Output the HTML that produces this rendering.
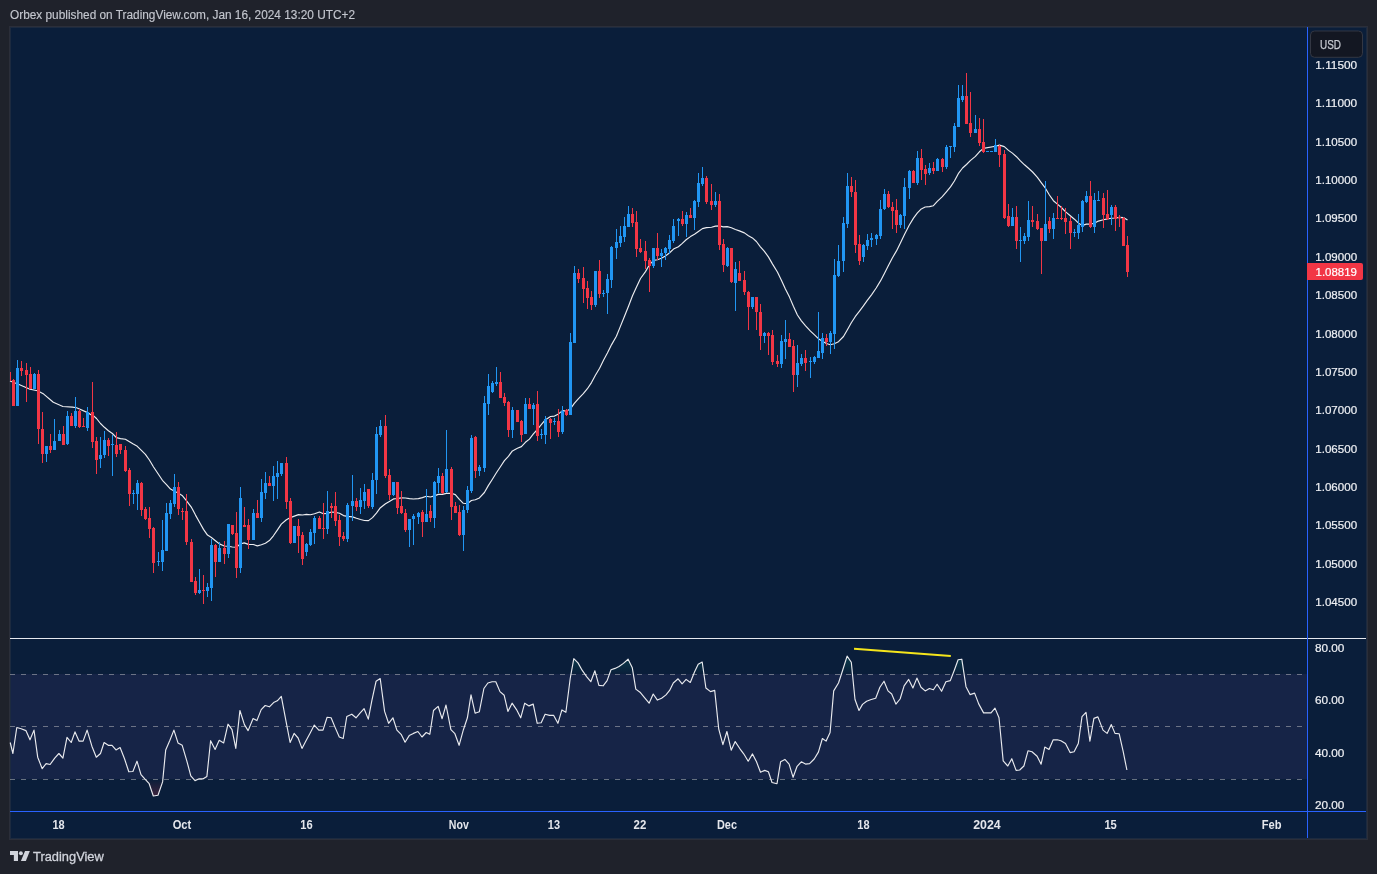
<!DOCTYPE html>
<html><head><meta charset="utf-8"><style>
html,body{margin:0;padding:0;background:#1f222b;width:1377px;height:874px;overflow:hidden}
svg{position:absolute;left:0;top:0;display:block;will-change:transform}
text{font-family:"Liberation Sans",sans-serif}
.ax{font-size:11.4px;fill:#eef0f4;stroke:#eef0f4;stroke-width:0.2px}
.tl{font-size:12.3px;fill:#e4e6ec;font-weight:bold}
.usd{font-size:13px;fill:#c8cbd2;stroke:#c8cbd2;stroke-width:0.25px}
.hdr{font-size:12px;fill:#c3c6ce;stroke:#c3c6ce;stroke-width:0.15px}
.tv{font-size:13.6px;fill:#d1d4dc;stroke:#d1d4dc;stroke-width:0.3px}
</style></head><body>
<svg width="1377" height="874" viewBox="0 0 1377 874">
<text x="10" y="19" class="hdr" textLength="345" lengthAdjust="spacingAndGlyphs">Orbex published on TradingView.com, Jan 16, 2024 13:20 UTC+2</text>
<rect x="9" y="26" width="1359" height="814" fill="#2b2e39"/>
<rect x="10" y="27" width="1357" height="812" fill="#1c2a3f"/>
<rect x="11" y="28" width="1355" height="810" fill="#0a1e3a"/>
<rect x="11" y="674" width="1296" height="105" fill="#162447"/>
<line x1="10" y1="674.5" x2="1305" y2="674.5" stroke="#9a9ea8" stroke-width="1" stroke-dasharray="5 6" opacity="0.65"/>
<line x1="10" y1="726.5" x2="1305" y2="726.5" stroke="#9a9ea8" stroke-width="1" stroke-dasharray="5 6" opacity="0.65"/>
<line x1="10" y1="779.5" x2="1305" y2="779.5" stroke="#9a9ea8" stroke-width="1" stroke-dasharray="5 6" opacity="0.65"/>
<line x1="10" y1="638.5" x2="1366" y2="638.5" stroke="#e6e8ee" stroke-width="1"/>
<line x1="10" y1="811.5" x2="1366" y2="811.5" stroke="#2962ff" stroke-width="1"/>
<line x1="1307.5" y1="27" x2="1307.5" y2="838" stroke="#2962ff" stroke-width="1"/>
<text x="1315.3" y="68.7" class="ax" textLength="41.8" lengthAdjust="spacingAndGlyphs">1.11500</text>
<text x="1315.3" y="107.1" class="ax" textLength="41.8" lengthAdjust="spacingAndGlyphs">1.11000</text>
<text x="1315.3" y="145.5" class="ax" textLength="41.8" lengthAdjust="spacingAndGlyphs">1.10500</text>
<text x="1315.3" y="183.9" class="ax" textLength="41.8" lengthAdjust="spacingAndGlyphs">1.10000</text>
<text x="1315.3" y="222.3" class="ax" textLength="41.8" lengthAdjust="spacingAndGlyphs">1.09500</text>
<text x="1315.3" y="260.7" class="ax" textLength="41.8" lengthAdjust="spacingAndGlyphs">1.09000</text>
<text x="1315.3" y="299.1" class="ax" textLength="41.8" lengthAdjust="spacingAndGlyphs">1.08500</text>
<text x="1315.3" y="337.5" class="ax" textLength="41.8" lengthAdjust="spacingAndGlyphs">1.08000</text>
<text x="1315.3" y="375.9" class="ax" textLength="41.8" lengthAdjust="spacingAndGlyphs">1.07500</text>
<text x="1315.3" y="414.3" class="ax" textLength="41.8" lengthAdjust="spacingAndGlyphs">1.07000</text>
<text x="1315.3" y="452.7" class="ax" textLength="41.8" lengthAdjust="spacingAndGlyphs">1.06500</text>
<text x="1315.3" y="491.0" class="ax" textLength="41.8" lengthAdjust="spacingAndGlyphs">1.06000</text>
<text x="1315.3" y="529.4" class="ax" textLength="41.8" lengthAdjust="spacingAndGlyphs">1.05500</text>
<text x="1315.3" y="567.8" class="ax" textLength="41.8" lengthAdjust="spacingAndGlyphs">1.05000</text>
<text x="1315.3" y="606.2" class="ax" textLength="41.8" lengthAdjust="spacingAndGlyphs">1.04500</text>
<path d="M1307 263h54a2 2 0 0 1 2 2v13a2 2 0 0 1 -2 2h-54z" fill="#f23645"/>
<text x="1315.5" y="275.7" class="ax" style="fill:#fff;stroke:#fff" textLength="41.5" lengthAdjust="spacingAndGlyphs">1.08819</text>
<rect x="1310.5" y="31" width="52" height="26.3" rx="4" fill="#131722" stroke="#333743"/>
<text x="1320" y="49.2" class="usd" textLength="21" lengthAdjust="spacingAndGlyphs">USD</text>
<text x="1314.9" y="652.0" class="ax" textLength="29.5" lengthAdjust="spacingAndGlyphs">80.00</text>
<text x="1314.9" y="704.4" class="ax" textLength="29.5" lengthAdjust="spacingAndGlyphs">60.00</text>
<text x="1314.9" y="756.8" class="ax" textLength="29.5" lengthAdjust="spacingAndGlyphs">40.00</text>
<text x="1314.9" y="809.2" class="ax" textLength="29.5" lengthAdjust="spacingAndGlyphs">20.00</text>
<text x="52.4" y="829.1" class="tl" textLength="12.2" lengthAdjust="spacingAndGlyphs">18</text>
<text x="172.7" y="829.1" class="tl" textLength="18.6" lengthAdjust="spacingAndGlyphs">Oct</text>
<text x="300.3" y="829.1" class="tl" textLength="12.4" lengthAdjust="spacingAndGlyphs">16</text>
<text x="448.8" y="829.1" class="tl" textLength="20" lengthAdjust="spacingAndGlyphs">Nov</text>
<text x="547.8" y="829.1" class="tl" textLength="12.2" lengthAdjust="spacingAndGlyphs">13</text>
<text x="633.6" y="829.1" class="tl" textLength="12.7" lengthAdjust="spacingAndGlyphs">22</text>
<text x="717.0" y="829.1" class="tl" textLength="20" lengthAdjust="spacingAndGlyphs">Dec</text>
<text x="857.3" y="829.1" class="tl" textLength="12.2" lengthAdjust="spacingAndGlyphs">18</text>
<text x="973.2" y="829.1" class="tl" textLength="27.5" lengthAdjust="spacingAndGlyphs">2024</text>
<text x="1104.4" y="829.1" class="tl" textLength="12.4" lengthAdjust="spacingAndGlyphs">15</text>
<text x="1261.7" y="829.1" class="tl" textLength="19.8" lengthAdjust="spacingAndGlyphs">Feb</text>
<polyline points="10.0,381.0 19.0,384.5 30.0,389.3 37.5,390.7 43.7,394.1 53.3,402.3 62.9,406.5 72.5,407.1 76.6,407.8 87.6,412.6 90.9,414.8 92.5,414.9 96.5,418.5 100.5,423.5 104.4,427.3 108.4,430.7 112.4,433.5 116.4,437.6 120.5,438.6 125.4,439.2 129.5,441.7 133.3,444.0 137.3,446.3 141.4,450.4 145.4,454.3 149.4,460.0 153.4,466.8 158.4,474.3 162.4,480.3 166.5,484.6 170.5,489.1 174.5,491.2 178.5,493.3 182.5,495.8 186.4,500.7 191.5,507.4 195.5,515.1 199.5,522.2 203.5,529.4 207.5,535.1 211.4,537.5 215.4,540.7 219.4,543.9 224.3,546.0 228.3,546.3 232.3,547.0 236.3,547.3 240.3,544.0 244.2,542.9 248.4,544.4 253.3,544.5 257.3,545.9 261.4,544.8 265.4,543.2 269.4,540.6 273.4,535.8 277.3,530.1 281.3,524.1 286.4,519.8 290.4,517.6 294.4,516.1 298.5,514.6 302.5,515.0 306.4,514.4 310.5,514.7 314.5,513.8 319.5,512.0 323.4,513.8 327.5,513.4 331.5,512.0 335.4,512.4 339.5,513.3 343.5,515.6 347.4,516.4 352.6,516.9 356.5,518.3 360.5,519.5 364.4,520.5 368.5,520.6 372.5,517.6 376.4,513.1 380.4,507.7 385.5,503.8 389.4,501.4 393.5,498.9 397.5,498.5 401.4,497.9 405.4,498.0 409.5,498.6 413.4,499.0 418.4,498.6 422.4,497.6 426.3,496.3 430.4,497.0 434.4,495.9 438.3,494.4 442.3,494.4 446.4,493.4 451.4,493.2 455.3,494.6 459.4,499.3 463.3,503.3 467.5,503.6 471.4,500.5 475.3,499.8 479.4,497.9 484.4,492.5 488.3,485.6 492.4,479.2 496.4,472.7 500.4,466.7 504.4,460.6 508.4,456.3 512.4,450.9 517.4,448.3 521.4,446.6 525.4,442.3 529.4,439.1 533.4,433.8 537.4,429.5 541.5,424.4 545.5,419.7 550.5,416.5 554.5,416.1 558.5,413.9 562.5,410.6 566.5,411.1 570.4,408.9 574.3,403.3 578.5,398.6 583.3,393.7 587.4,388.7 591.5,382.6 595.4,375.3 599.6,368.2 603.5,360.3 607.4,353.1 611.6,344.6 616.4,336.3 620.4,326.4 624.5,316.3 628.6,306.0 632.5,295.8 636.5,287.1 640.5,278.5 645.5,271.6 649.4,264.8 653.5,260.4 657.5,259.8 661.4,258.3 665.4,256.0 669.4,253.0 673.5,249.1 678.4,246.7 682.3,243.4 686.4,239.5 690.5,236.6 694.5,234.3 698.4,231.5 702.4,228.6 706.4,227.6 711.5,227.2 715.5,226.1 719.4,225.9 723.2,226.9 727.2,226.6 731.4,227.8 735.4,229.5 739.4,230.9 744.4,232.9 748.4,235.7 752.4,237.9 756.4,241.5 760.4,246.8 764.4,251.4 768.4,256.9 772.4,263.9 777.4,272.0 781.4,280.3 785.4,289.1 789.5,297.1 793.4,306.3 797.4,315.0 801.4,320.8 805.6,325.8 810.5,331.2 814.5,334.9 818.4,338.7 822.4,341.2 826.4,343.5 830.3,344.7 834.2,343.7 838.5,341.7 843.5,336.5 847.4,329.7 851.3,322.8 855.2,316.7 859.5,311.1 863.4,305.9 867.3,300.4 871.5,294.8 876.2,288.0 880.5,280.9 884.4,273.4 888.3,265.8 892.2,258.2 896.5,250.9 900.4,243.0 904.6,234.3 909.2,225.3 913.5,218.1 917.4,212.9 921.3,208.9 925.2,207.0 929.5,206.6 933.4,205.7 937.3,201.3 942.3,196.6 946.6,191.6 950.5,186.9 954.4,181.0 958.3,173.7 962.6,168.0 966.5,164.5 970.3,160.6 975.4,156.4 979.4,151.8 983.4,148.4 995.5,146.2 999.4,145.1 1004.3,146.6 1008.5,150.4 1012.4,153.1 1016.5,156.7 1020.4,160.9 1024.5,164.8 1028.5,168.3 1032.6,172.0 1037.4,177.4 1041.4,182.9 1045.4,188.2 1049.4,195.0 1053.4,200.7 1057.4,204.1 1061.4,207.5 1065.4,211.6 1070.3,215.7 1074.4,219.2 1078.5,223.2 1082.5,225.4 1086.4,224.1 1090.4,224.1 1094.4,223.3 1098.3,221.1 1103.4,219.8 1107.4,218.9 1111.4,218.2 1115.3,218.0 1119.3,217.4 1123.4,217.6 1127.5,220.1" fill="none" stroke="#ededf0" stroke-width="1.15" stroke-linejoin="round"/>
<rect x="10" y="372" width="1" height="9" fill="#f23645"/>
<rect x="986" y="151" width="3" height="1" fill="#2196f3"/><rect x="990" y="151" width="3" height="1" fill="#2196f3"/>
<rect x="13" y="379" width="1" height="27" fill="#f23645"/>
<rect x="12" y="380" width="3" height="26" fill="#f23645"/>
<rect x="17" y="360" width="1" height="46" fill="#2196f3"/>
<rect x="16" y="368" width="3" height="38" fill="#2196f3"/>
<rect x="21" y="361" width="1" height="15" fill="#f23645"/>
<rect x="20" y="368" width="3" height="3" fill="#f23645"/>
<rect x="26" y="363" width="1" height="39" fill="#f23645"/>
<rect x="25" y="370" width="3" height="5" fill="#f23645"/>
<rect x="30" y="367" width="1" height="22" fill="#f23645"/>
<rect x="29" y="374" width="3" height="15" fill="#f23645"/>
<rect x="34" y="373" width="1" height="16" fill="#2196f3"/>
<rect x="33" y="374" width="3" height="15" fill="#2196f3"/>
<rect x="38" y="370" width="1" height="74" fill="#f23645"/>
<rect x="37" y="374" width="3" height="55" fill="#f23645"/>
<rect x="42" y="412" width="1" height="51" fill="#f23645"/>
<rect x="41" y="429" width="3" height="25" fill="#f23645"/>
<rect x="46" y="446" width="1" height="16" fill="#2196f3"/>
<rect x="45" y="446" width="3" height="8" fill="#2196f3"/>
<rect x="50" y="434" width="1" height="19" fill="#f23645"/>
<rect x="49" y="446" width="3" height="4" fill="#f23645"/>
<rect x="54" y="419" width="1" height="31" fill="#2196f3"/>
<rect x="53" y="441" width="3" height="9" fill="#2196f3"/>
<rect x="59" y="430" width="1" height="11" fill="#2196f3"/>
<rect x="58" y="434" width="3" height="7" fill="#2196f3"/>
<rect x="63" y="426" width="1" height="19" fill="#f23645"/>
<rect x="62" y="434" width="3" height="11" fill="#f23645"/>
<rect x="67" y="411" width="1" height="34" fill="#2196f3"/>
<rect x="66" y="416" width="3" height="28" fill="#2196f3"/>
<rect x="71" y="413" width="1" height="13" fill="#f23645"/>
<rect x="70" y="416" width="3" height="10" fill="#f23645"/>
<rect x="75" y="397" width="1" height="31" fill="#2196f3"/>
<rect x="74" y="411" width="3" height="15" fill="#2196f3"/>
<rect x="79" y="409" width="1" height="19" fill="#f23645"/>
<rect x="78" y="411" width="3" height="16" fill="#f23645"/>
<rect x="83" y="418" width="1" height="9" fill="#f23645"/>
<rect x="82" y="426" width="3" height="1" fill="#f23645"/>
<rect x="87" y="407" width="1" height="24" fill="#2196f3"/>
<rect x="86" y="412" width="3" height="16" fill="#2196f3"/>
<rect x="92" y="382" width="1" height="66" fill="#f23645"/>
<rect x="91" y="412" width="3" height="30" fill="#f23645"/>
<rect x="96" y="437" width="1" height="37" fill="#f23645"/>
<rect x="95" y="441" width="3" height="19" fill="#f23645"/>
<rect x="100" y="437" width="1" height="31" fill="#2196f3"/>
<rect x="99" y="455" width="3" height="4" fill="#2196f3"/>
<rect x="104" y="431" width="1" height="27" fill="#2196f3"/>
<rect x="103" y="440" width="3" height="15" fill="#2196f3"/>
<rect x="108" y="438" width="1" height="18" fill="#f23645"/>
<rect x="107" y="440" width="3" height="6" fill="#f23645"/>
<rect x="112" y="435" width="1" height="41" fill="#2196f3"/>
<rect x="111" y="444" width="3" height="1" fill="#2196f3"/>
<rect x="116" y="432" width="1" height="25" fill="#f23645"/>
<rect x="115" y="445" width="3" height="9" fill="#f23645"/>
<rect x="120" y="444" width="1" height="10" fill="#f23645"/>
<rect x="119" y="444" width="3" height="6" fill="#f23645"/>
<rect x="125" y="446" width="1" height="26" fill="#f23645"/>
<rect x="124" y="450" width="3" height="21" fill="#f23645"/>
<rect x="129" y="468" width="1" height="38" fill="#f23645"/>
<rect x="128" y="470" width="3" height="24" fill="#f23645"/>
<rect x="133" y="490" width="1" height="14" fill="#2196f3"/>
<rect x="132" y="493" width="3" height="1" fill="#2196f3"/>
<rect x="137" y="480" width="1" height="30" fill="#2196f3"/>
<rect x="136" y="483" width="3" height="11" fill="#2196f3"/>
<rect x="141" y="482" width="1" height="34" fill="#f23645"/>
<rect x="140" y="483" width="3" height="27" fill="#f23645"/>
<rect x="145" y="507" width="1" height="13" fill="#f23645"/>
<rect x="144" y="509" width="3" height="10" fill="#f23645"/>
<rect x="149" y="507" width="1" height="31" fill="#f23645"/>
<rect x="148" y="518" width="3" height="11" fill="#f23645"/>
<rect x="153" y="527" width="1" height="46" fill="#f23645"/>
<rect x="152" y="528" width="3" height="35" fill="#f23645"/>
<rect x="158" y="552" width="1" height="14" fill="#2196f3"/>
<rect x="157" y="561" width="3" height="1" fill="#2196f3"/>
<rect x="162" y="520" width="1" height="51" fill="#2196f3"/>
<rect x="161" y="550" width="3" height="12" fill="#2196f3"/>
<rect x="166" y="503" width="1" height="48" fill="#2196f3"/>
<rect x="165" y="513" width="3" height="38" fill="#2196f3"/>
<rect x="170" y="500" width="1" height="19" fill="#2196f3"/>
<rect x="169" y="503" width="3" height="11" fill="#2196f3"/>
<rect x="174" y="474" width="1" height="33" fill="#2196f3"/>
<rect x="173" y="487" width="3" height="17" fill="#2196f3"/>
<rect x="178" y="482" width="1" height="33" fill="#f23645"/>
<rect x="177" y="487" width="3" height="22" fill="#f23645"/>
<rect x="182" y="508" width="1" height="12" fill="#f23645"/>
<rect x="181" y="511" width="3" height="1" fill="#f23645"/>
<rect x="186" y="494" width="1" height="51" fill="#f23645"/>
<rect x="185" y="511" width="3" height="31" fill="#f23645"/>
<rect x="191" y="539" width="1" height="43" fill="#f23645"/>
<rect x="190" y="542" width="3" height="40" fill="#f23645"/>
<rect x="195" y="577" width="1" height="18" fill="#f23645"/>
<rect x="194" y="581" width="3" height="12" fill="#f23645"/>
<rect x="199" y="569" width="1" height="25" fill="#2196f3"/>
<rect x="198" y="590" width="3" height="3" fill="#2196f3"/>
<rect x="203" y="575" width="1" height="29" fill="#f23645"/>
<rect x="202" y="590" width="3" height="1" fill="#f23645"/>
<rect x="207" y="583" width="1" height="14" fill="#2196f3"/>
<rect x="206" y="587" width="3" height="4" fill="#2196f3"/>
<rect x="211" y="539" width="1" height="62" fill="#2196f3"/>
<rect x="210" y="545" width="3" height="43" fill="#2196f3"/>
<rect x="215" y="544" width="1" height="33" fill="#f23645"/>
<rect x="214" y="545" width="3" height="17" fill="#f23645"/>
<rect x="219" y="542" width="1" height="20" fill="#2196f3"/>
<rect x="218" y="548" width="3" height="14" fill="#2196f3"/>
<rect x="224" y="541" width="1" height="23" fill="#f23645"/>
<rect x="223" y="548" width="3" height="6" fill="#f23645"/>
<rect x="228" y="524" width="1" height="34" fill="#2196f3"/>
<rect x="227" y="524" width="3" height="30" fill="#2196f3"/>
<rect x="232" y="525" width="1" height="10" fill="#f23645"/>
<rect x="231" y="525" width="3" height="9" fill="#f23645"/>
<rect x="236" y="512" width="1" height="66" fill="#f23645"/>
<rect x="235" y="533" width="3" height="35" fill="#f23645"/>
<rect x="240" y="487" width="1" height="86" fill="#2196f3"/>
<rect x="239" y="498" width="3" height="70" fill="#2196f3"/>
<rect x="244" y="507" width="1" height="20" fill="#f23645"/>
<rect x="243" y="525" width="3" height="2" fill="#f23645"/>
<rect x="248" y="519" width="1" height="30" fill="#f23645"/>
<rect x="247" y="525" width="3" height="15" fill="#f23645"/>
<rect x="253" y="509" width="1" height="31" fill="#2196f3"/>
<rect x="252" y="513" width="3" height="27" fill="#2196f3"/>
<rect x="257" y="500" width="1" height="18" fill="#f23645"/>
<rect x="256" y="513" width="3" height="5" fill="#f23645"/>
<rect x="261" y="479" width="1" height="43" fill="#2196f3"/>
<rect x="260" y="492" width="3" height="26" fill="#2196f3"/>
<rect x="265" y="472" width="1" height="27" fill="#2196f3"/>
<rect x="264" y="483" width="3" height="10" fill="#2196f3"/>
<rect x="269" y="476" width="1" height="10" fill="#f23645"/>
<rect x="268" y="483" width="3" height="3" fill="#f23645"/>
<rect x="273" y="466" width="1" height="35" fill="#2196f3"/>
<rect x="272" y="476" width="3" height="10" fill="#2196f3"/>
<rect x="277" y="461" width="1" height="38" fill="#2196f3"/>
<rect x="276" y="473" width="3" height="4" fill="#2196f3"/>
<rect x="281" y="463" width="1" height="13" fill="#2196f3"/>
<rect x="280" y="463" width="3" height="11" fill="#2196f3"/>
<rect x="286" y="457" width="1" height="52" fill="#f23645"/>
<rect x="285" y="463" width="3" height="39" fill="#f23645"/>
<rect x="290" y="498" width="1" height="46" fill="#f23645"/>
<rect x="289" y="501" width="3" height="42" fill="#f23645"/>
<rect x="294" y="526" width="1" height="17" fill="#2196f3"/>
<rect x="293" y="526" width="3" height="17" fill="#2196f3"/>
<rect x="298" y="519" width="1" height="34" fill="#f23645"/>
<rect x="297" y="526" width="3" height="10" fill="#f23645"/>
<rect x="302" y="532" width="1" height="33" fill="#f23645"/>
<rect x="301" y="535" width="3" height="24" fill="#f23645"/>
<rect x="306" y="543" width="1" height="13" fill="#2196f3"/>
<rect x="305" y="544" width="3" height="8" fill="#2196f3"/>
<rect x="310" y="529" width="1" height="17" fill="#2196f3"/>
<rect x="309" y="532" width="3" height="13" fill="#2196f3"/>
<rect x="314" y="516" width="1" height="28" fill="#2196f3"/>
<rect x="313" y="518" width="3" height="15" fill="#2196f3"/>
<rect x="319" y="516" width="1" height="13" fill="#f23645"/>
<rect x="318" y="518" width="3" height="11" fill="#f23645"/>
<rect x="323" y="503" width="1" height="36" fill="#f23645"/>
<rect x="322" y="528" width="3" height="1" fill="#f23645"/>
<rect x="327" y="491" width="1" height="43" fill="#2196f3"/>
<rect x="326" y="511" width="3" height="18" fill="#2196f3"/>
<rect x="331" y="503" width="1" height="15" fill="#f23645"/>
<rect x="330" y="506" width="3" height="2" fill="#f23645"/>
<rect x="335" y="492" width="1" height="34" fill="#f23645"/>
<rect x="334" y="506" width="3" height="15" fill="#f23645"/>
<rect x="339" y="515" width="1" height="31" fill="#f23645"/>
<rect x="338" y="520" width="3" height="17" fill="#f23645"/>
<rect x="343" y="532" width="1" height="9" fill="#f23645"/>
<rect x="342" y="536" width="3" height="3" fill="#f23645"/>
<rect x="347" y="503" width="1" height="39" fill="#2196f3"/>
<rect x="346" y="505" width="3" height="34" fill="#2196f3"/>
<rect x="352" y="475" width="1" height="46" fill="#2196f3"/>
<rect x="351" y="501" width="3" height="5" fill="#2196f3"/>
<rect x="356" y="498" width="1" height="13" fill="#f23645"/>
<rect x="355" y="501" width="3" height="6" fill="#f23645"/>
<rect x="360" y="488" width="1" height="26" fill="#2196f3"/>
<rect x="359" y="500" width="3" height="7" fill="#2196f3"/>
<rect x="364" y="484" width="1" height="25" fill="#2196f3"/>
<rect x="363" y="492" width="3" height="9" fill="#2196f3"/>
<rect x="368" y="489" width="1" height="19" fill="#f23645"/>
<rect x="367" y="489" width="3" height="17" fill="#f23645"/>
<rect x="372" y="473" width="1" height="36" fill="#2196f3"/>
<rect x="371" y="480" width="3" height="27" fill="#2196f3"/>
<rect x="376" y="427" width="1" height="67" fill="#2196f3"/>
<rect x="375" y="434" width="3" height="46" fill="#2196f3"/>
<rect x="380" y="420" width="1" height="17" fill="#2196f3"/>
<rect x="379" y="426" width="3" height="9" fill="#2196f3"/>
<rect x="385" y="415" width="1" height="63" fill="#f23645"/>
<rect x="384" y="426" width="3" height="50" fill="#f23645"/>
<rect x="389" y="469" width="1" height="31" fill="#f23645"/>
<rect x="388" y="475" width="3" height="20" fill="#f23645"/>
<rect x="393" y="482" width="1" height="14" fill="#2196f3"/>
<rect x="392" y="482" width="3" height="13" fill="#2196f3"/>
<rect x="397" y="482" width="1" height="32" fill="#f23645"/>
<rect x="396" y="482" width="3" height="26" fill="#f23645"/>
<rect x="401" y="491" width="1" height="23" fill="#f23645"/>
<rect x="400" y="506" width="3" height="7" fill="#f23645"/>
<rect x="405" y="509" width="1" height="23" fill="#f23645"/>
<rect x="404" y="513" width="3" height="17" fill="#f23645"/>
<rect x="409" y="519" width="1" height="28" fill="#2196f3"/>
<rect x="408" y="519" width="3" height="11" fill="#2196f3"/>
<rect x="413" y="514" width="1" height="31" fill="#2196f3"/>
<rect x="412" y="516" width="3" height="3" fill="#2196f3"/>
<rect x="418" y="512" width="1" height="12" fill="#2196f3"/>
<rect x="417" y="513" width="3" height="4" fill="#2196f3"/>
<rect x="422" y="510" width="1" height="27" fill="#f23645"/>
<rect x="421" y="512" width="3" height="10" fill="#f23645"/>
<rect x="426" y="489" width="1" height="33" fill="#2196f3"/>
<rect x="425" y="514" width="3" height="8" fill="#2196f3"/>
<rect x="430" y="505" width="1" height="17" fill="#f23645"/>
<rect x="429" y="511" width="3" height="7" fill="#f23645"/>
<rect x="434" y="481" width="1" height="47" fill="#2196f3"/>
<rect x="433" y="482" width="3" height="36" fill="#2196f3"/>
<rect x="438" y="468" width="1" height="25" fill="#2196f3"/>
<rect x="437" y="476" width="3" height="7" fill="#2196f3"/>
<rect x="442" y="473" width="1" height="21" fill="#f23645"/>
<rect x="441" y="476" width="3" height="17" fill="#f23645"/>
<rect x="446" y="430" width="1" height="63" fill="#2196f3"/>
<rect x="445" y="469" width="3" height="23" fill="#2196f3"/>
<rect x="451" y="467" width="1" height="53" fill="#f23645"/>
<rect x="450" y="469" width="3" height="38" fill="#f23645"/>
<rect x="455" y="502" width="1" height="11" fill="#f23645"/>
<rect x="454" y="506" width="3" height="7" fill="#f23645"/>
<rect x="459" y="505" width="1" height="31" fill="#f23645"/>
<rect x="458" y="512" width="3" height="23" fill="#f23645"/>
<rect x="463" y="506" width="1" height="45" fill="#2196f3"/>
<rect x="462" y="510" width="3" height="25" fill="#2196f3"/>
<rect x="467" y="486" width="1" height="27" fill="#2196f3"/>
<rect x="466" y="490" width="3" height="20" fill="#2196f3"/>
<rect x="471" y="435" width="1" height="58" fill="#2196f3"/>
<rect x="470" y="438" width="3" height="53" fill="#2196f3"/>
<rect x="475" y="436" width="1" height="42" fill="#f23645"/>
<rect x="474" y="437" width="3" height="34" fill="#f23645"/>
<rect x="479" y="465" width="1" height="11" fill="#2196f3"/>
<rect x="478" y="467" width="3" height="4" fill="#2196f3"/>
<rect x="484" y="396" width="1" height="76" fill="#2196f3"/>
<rect x="483" y="403" width="3" height="65" fill="#2196f3"/>
<rect x="488" y="374" width="1" height="41" fill="#2196f3"/>
<rect x="487" y="386" width="3" height="18" fill="#2196f3"/>
<rect x="492" y="381" width="1" height="12" fill="#2196f3"/>
<rect x="491" y="383" width="3" height="9" fill="#2196f3"/>
<rect x="496" y="367" width="1" height="19" fill="#2196f3"/>
<rect x="495" y="382" width="3" height="2" fill="#2196f3"/>
<rect x="500" y="372" width="1" height="26" fill="#f23645"/>
<rect x="499" y="382" width="3" height="16" fill="#f23645"/>
<rect x="504" y="393" width="1" height="13" fill="#f23645"/>
<rect x="503" y="397" width="3" height="6" fill="#f23645"/>
<rect x="508" y="401" width="1" height="36" fill="#f23645"/>
<rect x="507" y="402" width="3" height="28" fill="#f23645"/>
<rect x="512" y="407" width="1" height="31" fill="#2196f3"/>
<rect x="511" y="410" width="3" height="20" fill="#2196f3"/>
<rect x="517" y="410" width="1" height="12" fill="#f23645"/>
<rect x="516" y="410" width="3" height="12" fill="#f23645"/>
<rect x="521" y="420" width="1" height="22" fill="#f23645"/>
<rect x="520" y="421" width="3" height="14" fill="#f23645"/>
<rect x="525" y="398" width="1" height="36" fill="#2196f3"/>
<rect x="524" y="404" width="3" height="30" fill="#2196f3"/>
<rect x="529" y="398" width="1" height="11" fill="#f23645"/>
<rect x="528" y="404" width="3" height="5" fill="#f23645"/>
<rect x="533" y="403" width="1" height="22" fill="#2196f3"/>
<rect x="532" y="405" width="3" height="4" fill="#2196f3"/>
<rect x="537" y="391" width="1" height="50" fill="#f23645"/>
<rect x="536" y="404" width="3" height="32" fill="#f23645"/>
<rect x="541" y="429" width="1" height="10" fill="#2196f3"/>
<rect x="540" y="434" width="3" height="1" fill="#2196f3"/>
<rect x="545" y="416" width="1" height="28" fill="#2196f3"/>
<rect x="544" y="419" width="3" height="16" fill="#2196f3"/>
<rect x="550" y="418" width="1" height="21" fill="#f23645"/>
<rect x="549" y="419" width="3" height="4" fill="#f23645"/>
<rect x="554" y="418" width="1" height="7" fill="#2196f3"/>
<rect x="553" y="421" width="3" height="1" fill="#2196f3"/>
<rect x="558" y="409" width="1" height="28" fill="#f23645"/>
<rect x="557" y="421" width="3" height="11" fill="#f23645"/>
<rect x="562" y="406" width="1" height="28" fill="#2196f3"/>
<rect x="561" y="411" width="3" height="21" fill="#2196f3"/>
<rect x="566" y="409" width="1" height="7" fill="#f23645"/>
<rect x="565" y="410" width="3" height="5" fill="#f23645"/>
<rect x="570" y="333" width="1" height="82" fill="#2196f3"/>
<rect x="569" y="342" width="3" height="73" fill="#2196f3"/>
<rect x="574" y="266" width="1" height="77" fill="#2196f3"/>
<rect x="573" y="273" width="3" height="70" fill="#2196f3"/>
<rect x="578" y="269" width="1" height="14" fill="#f23645"/>
<rect x="577" y="273" width="3" height="6" fill="#f23645"/>
<rect x="583" y="267" width="1" height="36" fill="#f23645"/>
<rect x="582" y="278" width="3" height="11" fill="#f23645"/>
<rect x="587" y="281" width="1" height="28" fill="#f23645"/>
<rect x="586" y="288" width="3" height="10" fill="#f23645"/>
<rect x="591" y="291" width="1" height="19" fill="#f23645"/>
<rect x="590" y="297" width="3" height="8" fill="#f23645"/>
<rect x="595" y="271" width="1" height="36" fill="#2196f3"/>
<rect x="594" y="271" width="3" height="34" fill="#2196f3"/>
<rect x="599" y="260" width="1" height="38" fill="#f23645"/>
<rect x="598" y="271" width="3" height="23" fill="#f23645"/>
<rect x="603" y="290" width="1" height="7" fill="#2196f3"/>
<rect x="602" y="293" width="3" height="1" fill="#2196f3"/>
<rect x="607" y="274" width="1" height="40" fill="#2196f3"/>
<rect x="606" y="279" width="3" height="14" fill="#2196f3"/>
<rect x="611" y="246" width="1" height="42" fill="#2196f3"/>
<rect x="610" y="247" width="3" height="33" fill="#2196f3"/>
<rect x="616" y="229" width="1" height="30" fill="#2196f3"/>
<rect x="615" y="242" width="3" height="6" fill="#2196f3"/>
<rect x="620" y="226" width="1" height="21" fill="#2196f3"/>
<rect x="619" y="236" width="3" height="7" fill="#2196f3"/>
<rect x="624" y="217" width="1" height="25" fill="#2196f3"/>
<rect x="623" y="226" width="3" height="11" fill="#2196f3"/>
<rect x="628" y="206" width="1" height="21" fill="#2196f3"/>
<rect x="627" y="214" width="3" height="13" fill="#2196f3"/>
<rect x="632" y="208" width="1" height="19" fill="#f23645"/>
<rect x="631" y="214" width="3" height="9" fill="#f23645"/>
<rect x="636" y="211" width="1" height="46" fill="#f23645"/>
<rect x="635" y="222" width="3" height="27" fill="#f23645"/>
<rect x="640" y="239" width="1" height="14" fill="#f23645"/>
<rect x="639" y="248" width="3" height="4" fill="#f23645"/>
<rect x="645" y="241" width="1" height="28" fill="#f23645"/>
<rect x="644" y="251" width="3" height="10" fill="#f23645"/>
<rect x="649" y="258" width="1" height="34" fill="#f23645"/>
<rect x="648" y="260" width="3" height="6" fill="#f23645"/>
<rect x="653" y="248" width="1" height="20" fill="#2196f3"/>
<rect x="652" y="248" width="3" height="18" fill="#2196f3"/>
<rect x="657" y="233" width="1" height="27" fill="#f23645"/>
<rect x="656" y="248" width="3" height="8" fill="#f23645"/>
<rect x="661" y="249" width="1" height="18" fill="#2196f3"/>
<rect x="660" y="253" width="3" height="3" fill="#2196f3"/>
<rect x="665" y="247" width="1" height="13" fill="#2196f3"/>
<rect x="664" y="248" width="3" height="5" fill="#2196f3"/>
<rect x="669" y="235" width="1" height="19" fill="#2196f3"/>
<rect x="668" y="240" width="3" height="9" fill="#2196f3"/>
<rect x="673" y="219" width="1" height="24" fill="#2196f3"/>
<rect x="672" y="226" width="3" height="15" fill="#2196f3"/>
<rect x="678" y="218" width="1" height="18" fill="#2196f3"/>
<rect x="677" y="219" width="3" height="2" fill="#2196f3"/>
<rect x="682" y="211" width="1" height="15" fill="#f23645"/>
<rect x="681" y="219" width="3" height="5" fill="#f23645"/>
<rect x="686" y="212" width="1" height="25" fill="#2196f3"/>
<rect x="685" y="215" width="3" height="9" fill="#2196f3"/>
<rect x="690" y="208" width="1" height="10" fill="#f23645"/>
<rect x="689" y="215" width="3" height="3" fill="#f23645"/>
<rect x="694" y="200" width="1" height="30" fill="#2196f3"/>
<rect x="693" y="201" width="3" height="17" fill="#2196f3"/>
<rect x="698" y="173" width="1" height="34" fill="#2196f3"/>
<rect x="697" y="183" width="3" height="19" fill="#2196f3"/>
<rect x="702" y="167" width="1" height="19" fill="#2196f3"/>
<rect x="701" y="178" width="3" height="6" fill="#2196f3"/>
<rect x="706" y="176" width="1" height="28" fill="#f23645"/>
<rect x="705" y="178" width="3" height="24" fill="#f23645"/>
<rect x="711" y="184" width="1" height="26" fill="#f23645"/>
<rect x="710" y="201" width="3" height="4" fill="#f23645"/>
<rect x="715" y="192" width="1" height="15" fill="#2196f3"/>
<rect x="714" y="201" width="3" height="4" fill="#2196f3"/>
<rect x="719" y="194" width="1" height="56" fill="#f23645"/>
<rect x="718" y="201" width="3" height="44" fill="#f23645"/>
<rect x="723" y="239" width="1" height="33" fill="#f23645"/>
<rect x="722" y="244" width="3" height="21" fill="#f23645"/>
<rect x="727" y="247" width="1" height="20" fill="#2196f3"/>
<rect x="726" y="248" width="3" height="18" fill="#2196f3"/>
<rect x="731" y="248" width="1" height="35" fill="#f23645"/>
<rect x="730" y="248" width="3" height="34" fill="#f23645"/>
<rect x="735" y="262" width="1" height="49" fill="#2196f3"/>
<rect x="734" y="269" width="3" height="14" fill="#2196f3"/>
<rect x="739" y="261" width="1" height="20" fill="#f23645"/>
<rect x="738" y="273" width="3" height="8" fill="#f23645"/>
<rect x="744" y="271" width="1" height="24" fill="#f23645"/>
<rect x="743" y="280" width="3" height="12" fill="#f23645"/>
<rect x="748" y="291" width="1" height="39" fill="#f23645"/>
<rect x="747" y="292" width="3" height="15" fill="#f23645"/>
<rect x="752" y="297" width="1" height="12" fill="#2196f3"/>
<rect x="751" y="297" width="3" height="10" fill="#2196f3"/>
<rect x="756" y="297" width="1" height="33" fill="#f23645"/>
<rect x="755" y="297" width="3" height="15" fill="#f23645"/>
<rect x="760" y="304" width="1" height="46" fill="#f23645"/>
<rect x="759" y="312" width="3" height="24" fill="#f23645"/>
<rect x="764" y="332" width="1" height="11" fill="#2196f3"/>
<rect x="763" y="333" width="3" height="3" fill="#2196f3"/>
<rect x="768" y="332" width="1" height="23" fill="#f23645"/>
<rect x="767" y="333" width="3" height="3" fill="#f23645"/>
<rect x="772" y="330" width="1" height="35" fill="#f23645"/>
<rect x="771" y="335" width="3" height="27" fill="#f23645"/>
<rect x="777" y="355" width="1" height="12" fill="#f23645"/>
<rect x="776" y="361" width="3" height="3" fill="#f23645"/>
<rect x="781" y="335" width="1" height="33" fill="#2196f3"/>
<rect x="780" y="341" width="3" height="23" fill="#2196f3"/>
<rect x="785" y="320" width="1" height="39" fill="#2196f3"/>
<rect x="784" y="339" width="3" height="3" fill="#2196f3"/>
<rect x="789" y="333" width="1" height="14" fill="#f23645"/>
<rect x="788" y="339" width="3" height="8" fill="#f23645"/>
<rect x="793" y="340" width="1" height="52" fill="#f23645"/>
<rect x="792" y="346" width="3" height="29" fill="#f23645"/>
<rect x="797" y="345" width="1" height="42" fill="#2196f3"/>
<rect x="796" y="363" width="3" height="12" fill="#2196f3"/>
<rect x="801" y="354" width="1" height="12" fill="#2196f3"/>
<rect x="800" y="358" width="3" height="6" fill="#2196f3"/>
<rect x="805" y="350" width="1" height="21" fill="#f23645"/>
<rect x="804" y="358" width="3" height="5" fill="#f23645"/>
<rect x="810" y="357" width="1" height="21" fill="#2196f3"/>
<rect x="809" y="361" width="3" height="1" fill="#2196f3"/>
<rect x="814" y="356" width="1" height="8" fill="#2196f3"/>
<rect x="813" y="357" width="3" height="5" fill="#2196f3"/>
<rect x="818" y="312" width="1" height="46" fill="#2196f3"/>
<rect x="817" y="351" width="3" height="7" fill="#2196f3"/>
<rect x="822" y="333" width="1" height="26" fill="#2196f3"/>
<rect x="821" y="338" width="3" height="15" fill="#2196f3"/>
<rect x="826" y="334" width="1" height="12" fill="#f23645"/>
<rect x="825" y="338" width="3" height="4" fill="#f23645"/>
<rect x="830" y="331" width="1" height="23" fill="#2196f3"/>
<rect x="829" y="333" width="3" height="9" fill="#2196f3"/>
<rect x="834" y="259" width="1" height="90" fill="#2196f3"/>
<rect x="833" y="275" width="3" height="59" fill="#2196f3"/>
<rect x="838" y="245" width="1" height="32" fill="#2196f3"/>
<rect x="837" y="261" width="3" height="15" fill="#2196f3"/>
<rect x="843" y="217" width="1" height="55" fill="#2196f3"/>
<rect x="842" y="223" width="3" height="38" fill="#2196f3"/>
<rect x="847" y="173" width="1" height="55" fill="#2196f3"/>
<rect x="846" y="186" width="3" height="38" fill="#2196f3"/>
<rect x="851" y="177" width="1" height="20" fill="#f23645"/>
<rect x="850" y="186" width="3" height="6" fill="#f23645"/>
<rect x="855" y="180" width="1" height="73" fill="#f23645"/>
<rect x="854" y="192" width="3" height="53" fill="#f23645"/>
<rect x="859" y="235" width="1" height="30" fill="#f23645"/>
<rect x="858" y="244" width="3" height="17" fill="#f23645"/>
<rect x="863" y="244" width="1" height="18" fill="#2196f3"/>
<rect x="862" y="245" width="3" height="12" fill="#2196f3"/>
<rect x="867" y="234" width="1" height="16" fill="#2196f3"/>
<rect x="866" y="240" width="3" height="6" fill="#2196f3"/>
<rect x="871" y="233" width="1" height="14" fill="#2196f3"/>
<rect x="870" y="238" width="3" height="2" fill="#2196f3"/>
<rect x="876" y="234" width="1" height="11" fill="#2196f3"/>
<rect x="875" y="235" width="3" height="4" fill="#2196f3"/>
<rect x="880" y="200" width="1" height="39" fill="#2196f3"/>
<rect x="879" y="209" width="3" height="27" fill="#2196f3"/>
<rect x="884" y="189" width="1" height="21" fill="#2196f3"/>
<rect x="883" y="194" width="3" height="15" fill="#2196f3"/>
<rect x="888" y="191" width="1" height="17" fill="#f23645"/>
<rect x="887" y="194" width="3" height="13" fill="#f23645"/>
<rect x="892" y="202" width="1" height="27" fill="#f23645"/>
<rect x="891" y="207" width="3" height="4" fill="#f23645"/>
<rect x="896" y="199" width="1" height="34" fill="#f23645"/>
<rect x="895" y="210" width="3" height="15" fill="#f23645"/>
<rect x="900" y="214" width="1" height="14" fill="#2196f3"/>
<rect x="899" y="215" width="3" height="10" fill="#2196f3"/>
<rect x="904" y="178" width="1" height="51" fill="#2196f3"/>
<rect x="903" y="187" width="3" height="29" fill="#2196f3"/>
<rect x="909" y="170" width="1" height="29" fill="#2196f3"/>
<rect x="908" y="171" width="3" height="17" fill="#2196f3"/>
<rect x="913" y="170" width="1" height="13" fill="#f23645"/>
<rect x="912" y="171" width="3" height="12" fill="#f23645"/>
<rect x="917" y="151" width="1" height="34" fill="#2196f3"/>
<rect x="916" y="158" width="3" height="25" fill="#2196f3"/>
<rect x="921" y="149" width="1" height="31" fill="#f23645"/>
<rect x="920" y="158" width="3" height="12" fill="#f23645"/>
<rect x="925" y="165" width="1" height="20" fill="#f23645"/>
<rect x="924" y="169" width="3" height="5" fill="#f23645"/>
<rect x="929" y="163" width="1" height="12" fill="#2196f3"/>
<rect x="928" y="168" width="3" height="5" fill="#2196f3"/>
<rect x="933" y="162" width="1" height="12" fill="#f23645"/>
<rect x="932" y="168" width="3" height="3" fill="#f23645"/>
<rect x="937" y="158" width="1" height="13" fill="#2196f3"/>
<rect x="936" y="159" width="3" height="12" fill="#2196f3"/>
<rect x="942" y="158" width="1" height="14" fill="#f23645"/>
<rect x="941" y="159" width="3" height="8" fill="#f23645"/>
<rect x="946" y="145" width="1" height="24" fill="#2196f3"/>
<rect x="945" y="147" width="3" height="20" fill="#2196f3"/>
<rect x="950" y="146" width="1" height="12" fill="#2196f3"/>
<rect x="949" y="146" width="3" height="1" fill="#2196f3"/>
<rect x="954" y="123" width="1" height="29" fill="#2196f3"/>
<rect x="953" y="126" width="3" height="21" fill="#2196f3"/>
<rect x="958" y="85" width="1" height="42" fill="#2196f3"/>
<rect x="957" y="98" width="3" height="29" fill="#2196f3"/>
<rect x="962" y="85" width="1" height="17" fill="#2196f3"/>
<rect x="961" y="96" width="3" height="4" fill="#2196f3"/>
<rect x="966" y="73" width="1" height="51" fill="#f23645"/>
<rect x="965" y="96" width="3" height="28" fill="#f23645"/>
<rect x="970" y="92" width="1" height="45" fill="#f23645"/>
<rect x="969" y="123" width="3" height="10" fill="#f23645"/>
<rect x="975" y="115" width="1" height="18" fill="#2196f3"/>
<rect x="974" y="129" width="3" height="4" fill="#2196f3"/>
<rect x="979" y="118" width="1" height="28" fill="#f23645"/>
<rect x="978" y="129" width="3" height="14" fill="#f23645"/>
<rect x="983" y="119" width="1" height="34" fill="#f23645"/>
<rect x="982" y="142" width="3" height="10" fill="#f23645"/>
<rect x="995" y="139" width="1" height="13" fill="#2196f3"/>
<rect x="994" y="145" width="3" height="7" fill="#2196f3"/>
<rect x="999" y="145" width="1" height="22" fill="#f23645"/>
<rect x="998" y="146" width="3" height="9" fill="#f23645"/>
<rect x="1004" y="150" width="1" height="69" fill="#f23645"/>
<rect x="1003" y="154" width="3" height="64" fill="#f23645"/>
<rect x="1008" y="204" width="1" height="23" fill="#f23645"/>
<rect x="1007" y="216" width="3" height="10" fill="#f23645"/>
<rect x="1012" y="208" width="1" height="18" fill="#2196f3"/>
<rect x="1011" y="217" width="3" height="9" fill="#2196f3"/>
<rect x="1016" y="206" width="1" height="43" fill="#f23645"/>
<rect x="1015" y="217" width="3" height="24" fill="#f23645"/>
<rect x="1020" y="227" width="1" height="35" fill="#2196f3"/>
<rect x="1019" y="240" width="3" height="1" fill="#2196f3"/>
<rect x="1024" y="233" width="1" height="11" fill="#2196f3"/>
<rect x="1023" y="236" width="3" height="5" fill="#2196f3"/>
<rect x="1028" y="201" width="1" height="40" fill="#2196f3"/>
<rect x="1027" y="220" width="3" height="17" fill="#2196f3"/>
<rect x="1032" y="206" width="1" height="21" fill="#f23645"/>
<rect x="1031" y="220" width="3" height="2" fill="#f23645"/>
<rect x="1037" y="214" width="1" height="16" fill="#f23645"/>
<rect x="1036" y="221" width="3" height="8" fill="#f23645"/>
<rect x="1041" y="228" width="1" height="46" fill="#f23645"/>
<rect x="1040" y="228" width="3" height="13" fill="#f23645"/>
<rect x="1045" y="181" width="1" height="60" fill="#2196f3"/>
<rect x="1044" y="224" width="3" height="17" fill="#2196f3"/>
<rect x="1049" y="217" width="1" height="16" fill="#f23645"/>
<rect x="1048" y="221" width="3" height="8" fill="#f23645"/>
<rect x="1053" y="213" width="1" height="26" fill="#2196f3"/>
<rect x="1052" y="218" width="3" height="11" fill="#2196f3"/>
<rect x="1057" y="196" width="1" height="23" fill="#f23645"/>
<rect x="1056" y="218" width="3" height="1" fill="#f23645"/>
<rect x="1061" y="206" width="1" height="14" fill="#f23645"/>
<rect x="1060" y="218" width="3" height="1" fill="#f23645"/>
<rect x="1065" y="208" width="1" height="26" fill="#f23645"/>
<rect x="1064" y="218" width="3" height="4" fill="#f23645"/>
<rect x="1070" y="217" width="1" height="32" fill="#f23645"/>
<rect x="1069" y="221" width="3" height="12" fill="#f23645"/>
<rect x="1074" y="229" width="1" height="8" fill="#2196f3"/>
<rect x="1073" y="232" width="3" height="1" fill="#2196f3"/>
<rect x="1078" y="214" width="1" height="25" fill="#2196f3"/>
<rect x="1077" y="225" width="3" height="8" fill="#2196f3"/>
<rect x="1082" y="200" width="1" height="32" fill="#2196f3"/>
<rect x="1081" y="201" width="3" height="26" fill="#2196f3"/>
<rect x="1086" y="191" width="1" height="12" fill="#2196f3"/>
<rect x="1085" y="196" width="3" height="6" fill="#2196f3"/>
<rect x="1090" y="181" width="1" height="47" fill="#f23645"/>
<rect x="1089" y="196" width="3" height="31" fill="#f23645"/>
<rect x="1094" y="193" width="1" height="40" fill="#2196f3"/>
<rect x="1093" y="200" width="3" height="27" fill="#2196f3"/>
<rect x="1098" y="191" width="1" height="10" fill="#2196f3"/>
<rect x="1097" y="200" width="3" height="1" fill="#2196f3"/>
<rect x="1103" y="193" width="1" height="35" fill="#f23645"/>
<rect x="1102" y="198" width="3" height="17" fill="#f23645"/>
<rect x="1107" y="190" width="1" height="30" fill="#f23645"/>
<rect x="1106" y="214" width="3" height="5" fill="#f23645"/>
<rect x="1111" y="205" width="1" height="20" fill="#2196f3"/>
<rect x="1110" y="207" width="3" height="8" fill="#2196f3"/>
<rect x="1115" y="205" width="1" height="26" fill="#f23645"/>
<rect x="1114" y="207" width="3" height="12" fill="#f23645"/>
<rect x="1119" y="215" width="1" height="12" fill="#f23645"/>
<rect x="1118" y="217" width="3" height="1" fill="#f23645"/>
<rect x="1123" y="217" width="1" height="29" fill="#f23645"/>
<rect x="1122" y="218" width="3" height="28" fill="#f23645"/>
<rect x="1127" y="236" width="1" height="41" fill="#f23645"/>
<rect x="1126" y="245" width="3" height="27" fill="#f23645"/>
<defs><clipPath id="ob"><rect x="0" y="639" width="1377" height="35.4"/></clipPath><clipPath id="os"><rect x="0" y="779.2" width="1377" height="31.8"/></clipPath><linearGradient id="gob" x1="0" y1="648" x2="0" y2="674.4" gradientUnits="userSpaceOnUse"><stop offset="0" stop-color="#089981" stop-opacity="0.35"/><stop offset="1" stop-color="#089981" stop-opacity="0"/></linearGradient><linearGradient id="gos" x1="0" y1="779.2" x2="0" y2="798" gradientUnits="userSpaceOnUse"><stop offset="0" stop-color="#f23645" stop-opacity="0"/><stop offset="1" stop-color="#f23645" stop-opacity="0.25"/></linearGradient></defs>
<polygon points="10.2,674.4 10.2,742.5 12.9,753.5 16.8,727.5 21.2,728.8 25.9,730.6 30.0,739.8 34.0,730.1 37.7,757.2 42.2,768.7 46.1,763.6 50.1,764.5 54.7,758.1 58.9,753.5 62.9,758.1 67.0,737.4 71.2,742.5 75.0,731.9 79.0,741.1 83.1,741.1 87.1,730.1 91.9,746.2 96.3,757.2 100.5,753.5 104.1,742.5 108.3,745.3 112.0,745.3 116.0,749.9 120.1,747.5 124.6,759.0 128.8,771.8 132.9,771.5 137.0,761.2 141.0,774.6 145.0,779.2 149.2,783.7 153.3,796.0 158.0,795.3 162.6,781.9 165.7,749.9 169.9,740.3 173.9,730.1 178.0,742.9 182.2,745.3 186.8,760.8 190.8,775.9 195.0,780.6 199.2,778.8 203.2,778.8 206.9,776.4 210.6,740.7 215.1,749.5 219.2,740.3 223.7,742.9 228.0,724.2 232.0,729.7 235.8,748.4 239.9,710.5 244.4,724.6 248.1,730.6 253.1,718.5 256.9,720.6 261.2,709.6 265.2,705.5 269.4,706.8 273.6,702.6 277.3,700.8 281.3,696.4 285.9,720.6 290.1,742.5 294.1,733.4 298.1,738.0 302.0,748.4 306.0,740.7 310.2,733.0 314.3,725.1 318.8,730.1 323.0,730.1 327.1,717.3 331.1,717.8 335.3,727.9 339.3,737.0 343.2,738.5 346.8,716.5 351.8,714.2 356.0,717.8 360.0,713.2 364.1,708.7 368.3,719.1 371.9,700.4 376.1,681.2 380.2,678.5 384.6,711.4 388.6,723.3 392.9,717.8 396.9,730.1 401.1,734.3 405.1,742.2 409.2,735.6 413.4,733.4 417.9,731.5 422.0,737.0 426.2,732.5 429.8,734.3 433.5,710.5 438.1,706.3 442.1,718.7 446.0,705.0 450.9,729.7 454.9,733.7 459.1,745.3 463.4,729.7 467.4,717.8 471.0,694.9 475.1,713.2 479.3,711.8 483.9,688.5 487.9,683.0 492.1,681.7 495.8,681.7 500.0,691.6 504.2,695.3 507.9,711.4 512.1,703.2 516.5,709.6 520.7,717.8 524.7,703.2 529.0,705.9 533.2,704.1 537.2,723.3 541.2,722.8 545.1,714.2 549.5,715.4 553.7,715.4 557.9,723.3 561.9,709.9 565.9,712.3 570.2,678.5 573.8,658.7 578.0,662.9 582.1,670.2 586.6,676.6 590.8,681.7 594.9,670.8 598.9,685.4 603.1,685.8 607.1,680.6 611.0,669.7 615.0,668.4 619.0,666.5 623.4,663.4 628.1,659.2 632.3,667.8 635.8,689.1 640.0,692.2 644.5,697.7 649.1,703.2 653.2,694.0 657.4,700.1 661.6,698.2 666.0,694.9 669.6,690.4 673.3,683.0 678.1,678.8 682.1,683.9 686.1,679.4 690.3,682.5 694.5,672.0 698.2,664.2 702.2,662.0 705.9,688.0 710.5,691.6 714.7,690.4 718.7,728.8 722.9,744.7 726.9,731.5 731.2,750.2 735.2,741.6 739.6,748.3 743.7,753.8 748.2,761.2 752.5,753.9 756.5,761.8 760.5,772.2 764.7,770.4 768.4,771.8 772.0,782.5 777.0,783.7 780.6,761.8 784.9,759.4 789.1,764.1 793.1,777.3 797.1,766.3 801.3,761.8 805.5,764.1 809.6,763.6 814.2,759.0 818.4,752.1 822.4,738.5 826.1,741.1 830.1,732.5 833.7,690.9 838.5,683.0 842.5,670.8 847.1,656.1 851.3,662.3 855.0,699.5 859.0,710.5 862.5,704.4 866.6,701.3 871.2,699.5 875.7,698.2 879.9,687.2 884.0,681.2 888.0,690.9 891.7,694.0 895.9,704.1 900.1,699.0 904.1,685.8 908.7,679.4 912.9,688.0 916.9,678.1 921.0,687.2 925.2,690.9 929.4,688.5 933.4,689.8 937.1,684.3 941.6,691.3 945.9,681.7 950.3,680.6 954.5,669.7 958.1,659.8 961.8,659.2 966.0,686.7 970.0,694.6 974.6,693.1 978.8,704.1 983.6,712.9 991.0,712.9 995.0,708.1 999.0,717.8 1003.2,760.9 1007.8,766.0 1011.8,758.7 1016.1,770.4 1019.7,770.0 1023.9,766.0 1028.0,750.8 1032.0,751.7 1037.1,756.3 1041.1,764.2 1044.8,747.1 1049.0,749.5 1053.2,739.8 1057.3,739.8 1060.9,740.7 1065.5,743.5 1070.1,752.6 1074.1,751.7 1078.3,743.5 1082.0,716.6 1086.0,712.3 1089.9,741.1 1093.9,718.4 1097.9,716.9 1103.0,730.1 1107.1,733.4 1111.3,724.6 1115.0,733.4 1119.2,733.8 1123.2,751.7 1126.9,770.0 1126.9,674.4" fill="url(#gob)" clip-path="url(#ob)"/>
<polygon points="10.2,779.2 10.2,742.5 12.9,753.5 16.8,727.5 21.2,728.8 25.9,730.6 30.0,739.8 34.0,730.1 37.7,757.2 42.2,768.7 46.1,763.6 50.1,764.5 54.7,758.1 58.9,753.5 62.9,758.1 67.0,737.4 71.2,742.5 75.0,731.9 79.0,741.1 83.1,741.1 87.1,730.1 91.9,746.2 96.3,757.2 100.5,753.5 104.1,742.5 108.3,745.3 112.0,745.3 116.0,749.9 120.1,747.5 124.6,759.0 128.8,771.8 132.9,771.5 137.0,761.2 141.0,774.6 145.0,779.2 149.2,783.7 153.3,796.0 158.0,795.3 162.6,781.9 165.7,749.9 169.9,740.3 173.9,730.1 178.0,742.9 182.2,745.3 186.8,760.8 190.8,775.9 195.0,780.6 199.2,778.8 203.2,778.8 206.9,776.4 210.6,740.7 215.1,749.5 219.2,740.3 223.7,742.9 228.0,724.2 232.0,729.7 235.8,748.4 239.9,710.5 244.4,724.6 248.1,730.6 253.1,718.5 256.9,720.6 261.2,709.6 265.2,705.5 269.4,706.8 273.6,702.6 277.3,700.8 281.3,696.4 285.9,720.6 290.1,742.5 294.1,733.4 298.1,738.0 302.0,748.4 306.0,740.7 310.2,733.0 314.3,725.1 318.8,730.1 323.0,730.1 327.1,717.3 331.1,717.8 335.3,727.9 339.3,737.0 343.2,738.5 346.8,716.5 351.8,714.2 356.0,717.8 360.0,713.2 364.1,708.7 368.3,719.1 371.9,700.4 376.1,681.2 380.2,678.5 384.6,711.4 388.6,723.3 392.9,717.8 396.9,730.1 401.1,734.3 405.1,742.2 409.2,735.6 413.4,733.4 417.9,731.5 422.0,737.0 426.2,732.5 429.8,734.3 433.5,710.5 438.1,706.3 442.1,718.7 446.0,705.0 450.9,729.7 454.9,733.7 459.1,745.3 463.4,729.7 467.4,717.8 471.0,694.9 475.1,713.2 479.3,711.8 483.9,688.5 487.9,683.0 492.1,681.7 495.8,681.7 500.0,691.6 504.2,695.3 507.9,711.4 512.1,703.2 516.5,709.6 520.7,717.8 524.7,703.2 529.0,705.9 533.2,704.1 537.2,723.3 541.2,722.8 545.1,714.2 549.5,715.4 553.7,715.4 557.9,723.3 561.9,709.9 565.9,712.3 570.2,678.5 573.8,658.7 578.0,662.9 582.1,670.2 586.6,676.6 590.8,681.7 594.9,670.8 598.9,685.4 603.1,685.8 607.1,680.6 611.0,669.7 615.0,668.4 619.0,666.5 623.4,663.4 628.1,659.2 632.3,667.8 635.8,689.1 640.0,692.2 644.5,697.7 649.1,703.2 653.2,694.0 657.4,700.1 661.6,698.2 666.0,694.9 669.6,690.4 673.3,683.0 678.1,678.8 682.1,683.9 686.1,679.4 690.3,682.5 694.5,672.0 698.2,664.2 702.2,662.0 705.9,688.0 710.5,691.6 714.7,690.4 718.7,728.8 722.9,744.7 726.9,731.5 731.2,750.2 735.2,741.6 739.6,748.3 743.7,753.8 748.2,761.2 752.5,753.9 756.5,761.8 760.5,772.2 764.7,770.4 768.4,771.8 772.0,782.5 777.0,783.7 780.6,761.8 784.9,759.4 789.1,764.1 793.1,777.3 797.1,766.3 801.3,761.8 805.5,764.1 809.6,763.6 814.2,759.0 818.4,752.1 822.4,738.5 826.1,741.1 830.1,732.5 833.7,690.9 838.5,683.0 842.5,670.8 847.1,656.1 851.3,662.3 855.0,699.5 859.0,710.5 862.5,704.4 866.6,701.3 871.2,699.5 875.7,698.2 879.9,687.2 884.0,681.2 888.0,690.9 891.7,694.0 895.9,704.1 900.1,699.0 904.1,685.8 908.7,679.4 912.9,688.0 916.9,678.1 921.0,687.2 925.2,690.9 929.4,688.5 933.4,689.8 937.1,684.3 941.6,691.3 945.9,681.7 950.3,680.6 954.5,669.7 958.1,659.8 961.8,659.2 966.0,686.7 970.0,694.6 974.6,693.1 978.8,704.1 983.6,712.9 991.0,712.9 995.0,708.1 999.0,717.8 1003.2,760.9 1007.8,766.0 1011.8,758.7 1016.1,770.4 1019.7,770.0 1023.9,766.0 1028.0,750.8 1032.0,751.7 1037.1,756.3 1041.1,764.2 1044.8,747.1 1049.0,749.5 1053.2,739.8 1057.3,739.8 1060.9,740.7 1065.5,743.5 1070.1,752.6 1074.1,751.7 1078.3,743.5 1082.0,716.6 1086.0,712.3 1089.9,741.1 1093.9,718.4 1097.9,716.9 1103.0,730.1 1107.1,733.4 1111.3,724.6 1115.0,733.4 1119.2,733.8 1123.2,751.7 1126.9,770.0 1126.9,779.2" fill="url(#gos)" clip-path="url(#os)"/>
<polyline points="10.2,742.5 12.9,753.5 16.8,727.5 21.2,728.8 25.9,730.6 30.0,739.8 34.0,730.1 37.7,757.2 42.2,768.7 46.1,763.6 50.1,764.5 54.7,758.1 58.9,753.5 62.9,758.1 67.0,737.4 71.2,742.5 75.0,731.9 79.0,741.1 83.1,741.1 87.1,730.1 91.9,746.2 96.3,757.2 100.5,753.5 104.1,742.5 108.3,745.3 112.0,745.3 116.0,749.9 120.1,747.5 124.6,759.0 128.8,771.8 132.9,771.5 137.0,761.2 141.0,774.6 145.0,779.2 149.2,783.7 153.3,796.0 158.0,795.3 162.6,781.9 165.7,749.9 169.9,740.3 173.9,730.1 178.0,742.9 182.2,745.3 186.8,760.8 190.8,775.9 195.0,780.6 199.2,778.8 203.2,778.8 206.9,776.4 210.6,740.7 215.1,749.5 219.2,740.3 223.7,742.9 228.0,724.2 232.0,729.7 235.8,748.4 239.9,710.5 244.4,724.6 248.1,730.6 253.1,718.5 256.9,720.6 261.2,709.6 265.2,705.5 269.4,706.8 273.6,702.6 277.3,700.8 281.3,696.4 285.9,720.6 290.1,742.5 294.1,733.4 298.1,738.0 302.0,748.4 306.0,740.7 310.2,733.0 314.3,725.1 318.8,730.1 323.0,730.1 327.1,717.3 331.1,717.8 335.3,727.9 339.3,737.0 343.2,738.5 346.8,716.5 351.8,714.2 356.0,717.8 360.0,713.2 364.1,708.7 368.3,719.1 371.9,700.4 376.1,681.2 380.2,678.5 384.6,711.4 388.6,723.3 392.9,717.8 396.9,730.1 401.1,734.3 405.1,742.2 409.2,735.6 413.4,733.4 417.9,731.5 422.0,737.0 426.2,732.5 429.8,734.3 433.5,710.5 438.1,706.3 442.1,718.7 446.0,705.0 450.9,729.7 454.9,733.7 459.1,745.3 463.4,729.7 467.4,717.8 471.0,694.9 475.1,713.2 479.3,711.8 483.9,688.5 487.9,683.0 492.1,681.7 495.8,681.7 500.0,691.6 504.2,695.3 507.9,711.4 512.1,703.2 516.5,709.6 520.7,717.8 524.7,703.2 529.0,705.9 533.2,704.1 537.2,723.3 541.2,722.8 545.1,714.2 549.5,715.4 553.7,715.4 557.9,723.3 561.9,709.9 565.9,712.3 570.2,678.5 573.8,658.7 578.0,662.9 582.1,670.2 586.6,676.6 590.8,681.7 594.9,670.8 598.9,685.4 603.1,685.8 607.1,680.6 611.0,669.7 615.0,668.4 619.0,666.5 623.4,663.4 628.1,659.2 632.3,667.8 635.8,689.1 640.0,692.2 644.5,697.7 649.1,703.2 653.2,694.0 657.4,700.1 661.6,698.2 666.0,694.9 669.6,690.4 673.3,683.0 678.1,678.8 682.1,683.9 686.1,679.4 690.3,682.5 694.5,672.0 698.2,664.2 702.2,662.0 705.9,688.0 710.5,691.6 714.7,690.4 718.7,728.8 722.9,744.7 726.9,731.5 731.2,750.2 735.2,741.6 739.6,748.3 743.7,753.8 748.2,761.2 752.5,753.9 756.5,761.8 760.5,772.2 764.7,770.4 768.4,771.8 772.0,782.5 777.0,783.7 780.6,761.8 784.9,759.4 789.1,764.1 793.1,777.3 797.1,766.3 801.3,761.8 805.5,764.1 809.6,763.6 814.2,759.0 818.4,752.1 822.4,738.5 826.1,741.1 830.1,732.5 833.7,690.9 838.5,683.0 842.5,670.8 847.1,656.1 851.3,662.3 855.0,699.5 859.0,710.5 862.5,704.4 866.6,701.3 871.2,699.5 875.7,698.2 879.9,687.2 884.0,681.2 888.0,690.9 891.7,694.0 895.9,704.1 900.1,699.0 904.1,685.8 908.7,679.4 912.9,688.0 916.9,678.1 921.0,687.2 925.2,690.9 929.4,688.5 933.4,689.8 937.1,684.3 941.6,691.3 945.9,681.7 950.3,680.6 954.5,669.7 958.1,659.8 961.8,659.2 966.0,686.7 970.0,694.6 974.6,693.1 978.8,704.1 983.6,712.9 991.0,712.9 995.0,708.1 999.0,717.8 1003.2,760.9 1007.8,766.0 1011.8,758.7 1016.1,770.4 1019.7,770.0 1023.9,766.0 1028.0,750.8 1032.0,751.7 1037.1,756.3 1041.1,764.2 1044.8,747.1 1049.0,749.5 1053.2,739.8 1057.3,739.8 1060.9,740.7 1065.5,743.5 1070.1,752.6 1074.1,751.7 1078.3,743.5 1082.0,716.6 1086.0,712.3 1089.9,741.1 1093.9,718.4 1097.9,716.9 1103.0,730.1 1107.1,733.4 1111.3,724.6 1115.0,733.4 1119.2,733.8 1123.2,751.7 1126.9,770.0" fill="none" stroke="#e9eaee" stroke-width="1.15" stroke-linejoin="round"/>
<line x1="854" y1="648.7" x2="950.8" y2="656.1" stroke="#f5e51b" stroke-width="2"/>
<g fill="#d1d4dc">
<path d="M10 851h8v10h-4.15v-6.1h-3.85z"/><circle cx="20.9" cy="853.2" r="1.95"/><path d="M25.05 851h4.8l-4 10h-4.95z"/>
</g>
<text x="33" y="861" class="tv" textLength="70.8" lengthAdjust="spacingAndGlyphs">TradingView</text>
</svg>
</body></html>
